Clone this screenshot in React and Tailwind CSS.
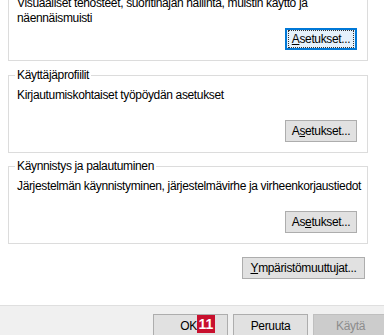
import React from "react";

function Btn({ children, className = "", focused = false, disabled = false }) {
  return (
    <div
      className={
        "flex items-center justify-center h-[22px] border text-[12px] leading-none whitespace-nowrap " +
        (disabled
          ? "bg-[#cccccc] border-[#bfbfbf] text-[#8c8c8c] "
          : focused
          ? "bg-[#e5f1fb] border-[#0078d7] border-2 text-black "
          : "bg-[#e1e1e1] border-[#adadad] text-black ") +
        className
      }
    >
      {focused ? (
        <div className="flex items-center justify-center w-full h-full border border-dotted border-[#333] m-[1px]">
          {children}
        </div>
      ) : (
        children
      )}
    </div>
  );
}

function Group({ label, children, className = "" }) {
  return (
    <div className={"relative border border-[#dcdcdc] flex flex-col h-[78px] pt-[12px] pl-[8px] pr-[10px] pb-[10px] " + className}>
      {label && (
        <span className="absolute top-[-8px] left-[6px] px-[2px] bg-white leading-[15px] whitespace-nowrap">{label}</span>
      )}
      {children}
    </div>
  );
}

export default function App() {
  return (
    <div className="w-[384px] h-[335px] overflow-hidden bg-white flex flex-col font-['Liberation_Sans',Arial,sans-serif] text-[12px] tracking-[-0.35px] text-black">
      <div className="flex-1 flex flex-col pl-[8px] w-[368px]">
        <Group className="mt-[-17px]">
          <div className="leading-[15px]">
            Visuaaliset tehosteet, suoritinajan hallinta, muistin käyttö ja
            <br />
            näennäismuisti
          </div>
          <Btn focused className="mt-auto self-end w-[72px]">
            <span>
              <u>A</u>setukset...
            </span>
          </Btn>
        </Group>
        <Group label="Käyttäjäprofiilit" className="mt-[14px]">
          <div className="leading-[15px] whitespace-nowrap">Kirjautumiskohtaiset työpöydän asetukset</div>
          <Btn className="mt-auto self-end w-[72px]">
            <span>
              A<u>s</u>etukset...
            </span>
          </Btn>
        </Group>
        <Group label="Käynnistys ja palautuminen" className="mt-[13px]">
          <div className="leading-[15px] whitespace-nowrap">Järjestelmän käynnistyminen, järjestelmävirhe ja virheenkorjaustiedot</div>
          <Btn className="mt-auto self-end w-[72px]">
            <span>
              As<u>e</u>tukset...
            </span>
          </Btn>
        </Group>
        <Btn className="mt-[13px] self-end mr-[3px] w-[123px]">
          <span>
            <u>Y</u>mpäristömuuttujat...
          </span>
        </Btn>
      </div>
      <div className="h-[30px] shrink-0 bg-[#f0f0f0] border-t border-[#dfdfdf] flex gap-[5px] pl-[153px] pt-[8px]">
        <div className="relative shrink-0">
          <Btn className="w-[75px] h-[23px]">
            <span className="pr-[4px]">OK</span>
          </Btn>
          <div className="absolute left-[44px] top-[1px] w-[18px] h-[18px] bg-[#c8102e] text-white font-bold text-[14px] tracking-normal leading-[18px] text-center">
            11
          </div>
        </div>
        <Btn className="w-[75px] h-[23px] shrink-0">Peruuta</Btn>
        <Btn disabled className="w-[75px] h-[23px] shrink-0">Käytä</Btn>
      </div>
    </div>
  );
}
